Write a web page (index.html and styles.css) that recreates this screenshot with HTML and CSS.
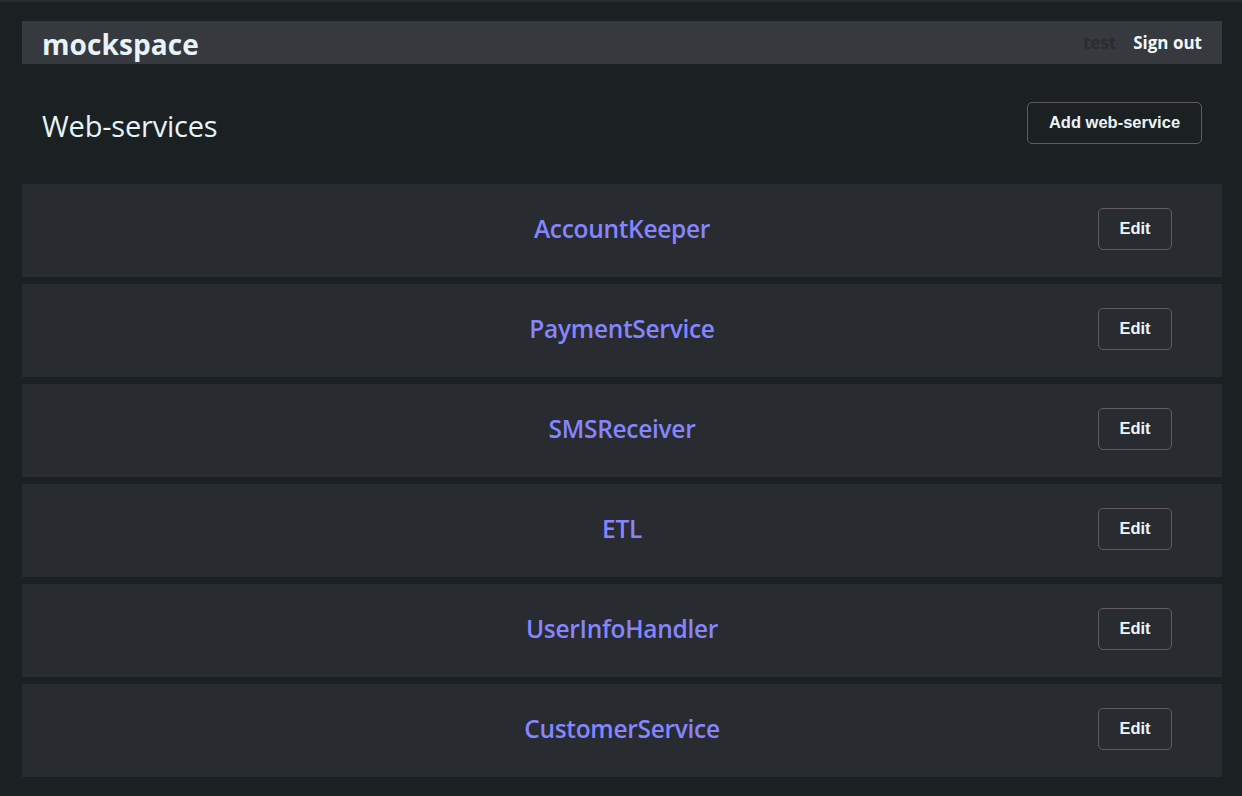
FILE: index.html
```html
<!DOCTYPE html>
<html>
<head>
<meta charset="utf-8">
<title>mockspace</title>
<link rel="stylesheet" href="styles.css">
</head>
<body>
<div class="page">
  <header class="topbar">
    <div class="brand">mockspace</div>
    <nav class="user">
      <span class="username">test</span>
      <a class="signout" href="#">Sign out</a>
    </nav>
  </header>
  <section class="titlebar">
    <h1 class="title">Web-services</h1>
    <button class="btn btn-add">Add web-service</button>
  </section>
  <ul class="services">
    <li class="service"><a class="service-name" href="#">AccountKeeper</a><button class="btn btn-edit">Edit</button></li>
    <li class="service"><a class="service-name" href="#">PaymentService</a><button class="btn btn-edit">Edit</button></li>
    <li class="service"><a class="service-name" href="#">SMSReceiver</a><button class="btn btn-edit">Edit</button></li>
    <li class="service"><a class="service-name" href="#">ETL</a><button class="btn btn-edit">Edit</button></li>
    <li class="service"><a class="service-name" href="#">UserInfoHandler</a><button class="btn btn-edit">Edit</button></li>
    <li class="service"><a class="service-name" href="#">CustomerService</a><button class="btn btn-edit">Edit</button></li>
  </ul>
</div>
</body>
</html>
```

FILE: styles.css
```css
html, body {
  margin: 0;
  padding: 0;
  background: #1b2023;
  height: 100%;
}
body {
  border-top: 2px solid #2a2d2f;
  box-sizing: border-box;
  font-family: "Open Sans", "Noto Sans", sans-serif;
  color: #e6f3f7;
}
.page {
  padding: 19px 20px 0 22px;
}
.topbar {
  height: 43px;
  background: #36393e;
  display: flex;
  align-items: center;
  justify-content: space-between;
  padding: 0 20px;
  overflow: hidden;
}
.brand {
  font-size: 28px;
  font-weight: 700;
  letter-spacing: 0.1px;
  color: #e6f3f7;
  line-height: 43px;
  padding-top: 4px;
}
.user {
  display: flex;
  align-items: center;
  gap: 17px;
  font-size: 17px;
  font-weight: 700;
}
.username {
  color: #2c2d30;
}
.signout {
  color: #f2f8fa;
  text-decoration: none;
}
.titlebar {
  height: 120px;
  display: flex;
  align-items: center;
  justify-content: space-between;
  padding: 0 20px;
}
.title {
  margin: 0;
  font-size: 29px;
  font-weight: 400;
  letter-spacing: -0.2px;
  color: #e6f3f7;
  padding-top: 2px;
}
.btn {
  background: transparent;
  border: 1px solid #605b62;
  border-radius: 5px;
  color: #eaf5f8;
  font-family: "Liberation Sans", Arial, sans-serif;
  font-weight: 700;
  font-size: 16.5px;
  height: 42px;
  box-sizing: border-box;
  cursor: pointer;
}
.btn-add {
  width: 175px;
  margin-top: -3px;
}
.services {
  list-style: none;
  margin: 0;
  padding: 0;
}
.service {
  height: 93px;
  margin-bottom: 7px;
  background: #282b2f;
  display: grid;
  grid-template-columns: 1fr auto 1fr;
  align-items: center;
}
.service-name {
  grid-column: 2;
  color: #8585ff;
  text-decoration: none;
  font-size: 24.5px;
  font-weight: 600;
  letter-spacing: -0.3px;
  margin-top: -4px;
}
.btn-edit {
  grid-column: 3;
  justify-self: end;
  width: 74px;
  margin-right: 50px;
  margin-top: -4px;
}
```
